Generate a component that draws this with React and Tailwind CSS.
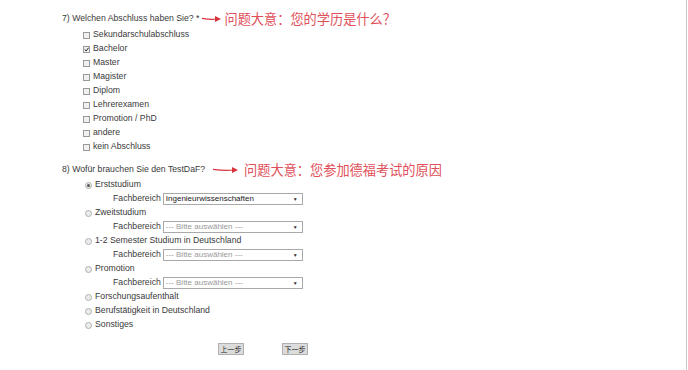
import React from "react";

const font = { fontFamily: '"Liberation Sans", Arial, sans-serif' };
const cjk = { fontFamily: '"Noto Sans CJK SC", sans-serif', textSpacingTrim: "space-all" };

function Check({ checked }) {
  return (
    <span className="inline-flex items-center justify-center w-[7px] h-[7px] border border-[#9a9a9a] bg-[#f0f0f0] mr-[3px] shrink-0">
      {checked && (
        <svg width="7" height="7" viewBox="0 0 7 7">
          <path d="M1 3.5 L3 5.5 L6.5 1" stroke="#222" strokeWidth="1.4" fill="none" />
        </svg>
      )}
    </span>
  );
}

function Radio({ checked }) {
  return (
    <span className="inline-flex items-center justify-center w-[7px] h-[7px] rounded-full border border-[#b0b0b0] bg-[#ececec] mr-[3px] shrink-0">
      {checked && <span className="w-[3px] h-[3px] rounded-full bg-[#555]" />}
    </span>
  );
}

function Arrow({ w, className }) {
  return (
    <svg width={w} height="8" viewBox={`0 0 ${w} 8`} className={className}>
      <path d={`M0 3.3 Q${w / 2} 5 ${w - 5} 4`} stroke="#d8323c" strokeWidth="1.2" fill="none" />
      <path d={`M${w - 6} 1 L${w} 4 L${w - 6} 7 Z`} fill="#d8323c" />
    </svg>
  );
}

function Select({ value, placeholder }) {
  return (
    <div className="w-[140px] h-[12px] border border-[#a9a9a9] bg-white flex items-center justify-between px-[2px] ml-[2px]">
      <span className={`text-[8px] leading-none ${placeholder ? "text-[#9a9a9a]" : "text-[#222]"}`}>{value}</span>
      <span className="text-[5px] leading-none text-[#333] mr-[2px]">▼</span>
    </div>
  );
}

const degrees = [
  ["Sekundarschulabschluss", false],
  ["Bachelor", true],
  ["Master", false],
  ["Magister", false],
  ["Diplom", false],
  ["Lehrerexamen", false],
  ["Promotion / PhD", false],
  ["andere", false],
  ["kein Abschluss", false],
];

export default function App() {
  const purposes = [
    { label: "Erststudium", checked: true, select: "Ingenieurwissenschaften" },
    { label: "Zweitstudium", select: "--- Bitte auswählen ---" },
    { label: "1-2 Semester Studium in Deutschland", select: "--- Bitte auswählen ---" },
    { label: "Promotion", select: "--- Bitte auswählen ---" },
    { label: "Forschungsaufenthalt" },
    { label: "Berufstätigkeit in Deutschland" },
    { label: "Sonstiges" },
  ];
  return (
    <div className="w-[688px] h-[370px] bg-white relative overflow-hidden text-[#3a3a3a]" style={font}>
      <div className="absolute right-[1px] top-0 w-[1px] h-full bg-[#c8c8c8]" />
      <div className="pt-[12px] pl-[62px] flex flex-col">
        <div className="h-[14px] flex items-center text-[8.7px]">
          <span>7) Welchen Abschluss haben Sie? *</span>
          <Arrow w={19} className="ml-[3px] mr-[3px]" />
          <span className="text-[13.2px] text-[#e0505a]" style={cjk}>
            问题大意：您的学历是什么？
          </span>
        </div>
        <div className="flex flex-col pl-[21px] pt-[2px]">
          {degrees.map(([l, c]) => (
            <div key={l} className="h-[14px] flex items-center text-[8.7px]">
              <Check checked={c} />
              <span>{l}</span>
            </div>
          ))}
        </div>
        <div className="h-[14px] flex items-center text-[8.7px] mt-[9px]">
          <span>8) Wofür brauchen Sie den TestDaF?</span>
          <Arrow w={25} className="ml-[8px] mr-[6px]" />
          <span className="text-[13.2px] text-[#e0505a]" style={cjk}>
            问题大意：您参加德福考试的原因
          </span>
        </div>
        <div className="flex flex-col pl-[23px] pt-[1px]">
          {purposes.map((p) => (
            <div key={p.label} className="flex flex-col">
              <div className="h-[14px] flex items-center text-[8.7px]">
                <Radio checked={p.checked} />
                <span>{p.label}</span>
              </div>
              {p.select && (
                <div className="h-[14px] flex items-center text-[8.7px] pl-[28px]">
                  <span>Fachbereich</span>
                  <Select value={p.select} placeholder={!p.checked} />
                </div>
              )}
            </div>
          ))}
        </div>
        <div className="flex pl-[156px] mt-[11px] gap-[38px]">
          <div className="w-[26px] h-[12px] bg-[#dcdcdc] border border-[#b0b0b0] flex items-center justify-center text-[7px] leading-none text-[#222]" style={cjk}>
            上一步
          </div>
          <div className="w-[26px] h-[12px] bg-[#dcdcdc] border border-[#b0b0b0] flex items-center justify-center text-[7px] leading-none text-[#222]" style={cjk}>
            下一步
          </div>
        </div>
      </div>
    </div>
  );
}
